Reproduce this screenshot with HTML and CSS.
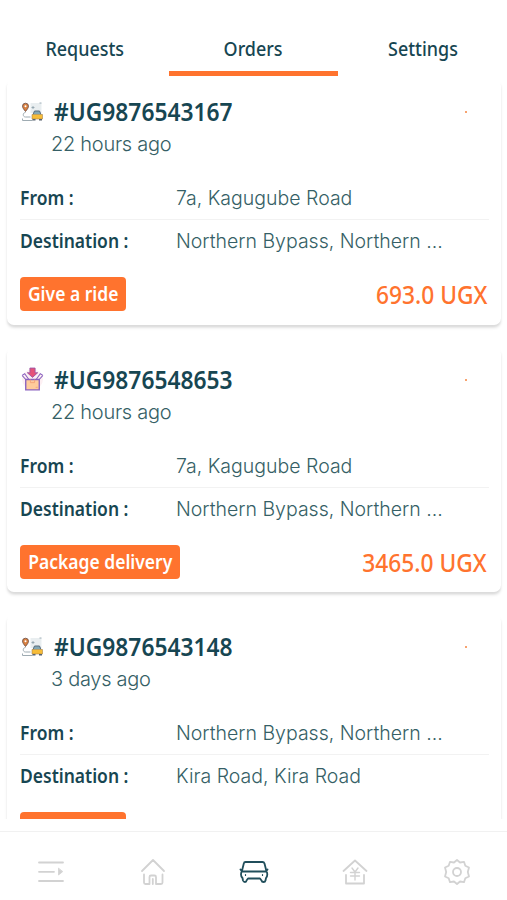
FILE: index.html
```html
<!DOCTYPE html>
<html lang="en">
<head>
<meta charset="utf-8">
<title>Orders</title>
<link rel="stylesheet" href="styles.css">
</head>
<body>
<svg class="defs" width="0" height="0">
  <symbol id="ride" viewBox="0 0 22 20">
    <path d="M9 1h11v10H9z" fill="#e9eef0"/>
    <path d="M4 10.500c-3 0-3 4.500 0 4.500h5M1 18.500h10M1 18.500v-2" fill="none" stroke="#9eabb2" stroke-width="1"/>
    <path d="M4 9.500C2.500 7.500 1 6 1 4.200a3 3 0 0 1 6 0C7 6 5.500 7.500 4 9.500z" fill="#d98140" stroke="#654a46" stroke-width=".8"/>
    <circle cx="4" cy="4.200" r="1" fill="#fff"/>
    <path d="M11.500 12.500l1.500-3.500h5l1.500 3.500" fill="#82a7b5" stroke="#596c7b"/>
    <path d="M10.500 12.500h10.500v4.500h-10.500z" fill="#f7bd38" stroke="#ab8546" stroke-width=".6"/>
    <path d="M11 17h3v1.500h-3zM17.500 17h3v1.500h-3z" fill="#596370"/>
    <path d="M11.500 4v3M10 5.500h3M18 1h2" stroke="#899ca7" stroke-width=".8"/>
  </symbol>
  <symbol id="package" viewBox="0 0 22 24">
    <circle cx="11" cy="12" r="10" fill="#fdf0f3"/>
    <path d="M8.500 1h5v4.500h2.500L11 10 6 5.500h2.500z" fill="#e65278" stroke="#9654a7" stroke-width=".8"/>
    <path d="M4.500 12h13v10h-13z" fill="#ffcc9b" stroke="#8a62bf" stroke-width="1.300"/>
    <path d="M4.500 12L1 8M17.500 12L21 8M1 8l2.500-1.500L7.500 12M21 8l-2.500-1.500L14.500 12" fill="none" stroke="#8a62bf" stroke-width="1"/>
    <path d="M9 12v3h4v-3M14 19.500h2" fill="none" stroke="#f3a078" stroke-width=".8"/>
  </symbol>
</svg>
<div class="app">
  <nav class="tabs">
    <a class="tab"><span class="narrow">Requests</span></a>
    <a class="tab active"><span class="narrow">Orders</span></a>
    <a class="tab"><span class="narrow">Settings</span></a>
  </nav>
  <main class="orders">
    <article class="card">
      <header class="head"><svg class="kind"><use href="#ride"/></svg><h2>#UG9876543167</h2><i class="dot"></i></header>
      <p class="time">22 hours ago</p>
      <dl>
        <div class="row"><dt>From :</dt><dd>7a, Kagugube Road</dd></div>
        <div class="row"><dt>Destination :</dt><dd>Northern Bypass, Northern ...</dd></div>
      </dl>
      <footer class="foot"><span class="badge"><span class="narrow">Give a ride</span></span><strong>693.0 UGX</strong></footer>
    </article>
    <article class="card">
      <header class="head"><svg class="kind parcel"><use href="#package"/></svg><h2>#UG9876548653</h2><i class="dot"></i></header>
      <p class="time">22 hours ago</p>
      <dl>
        <div class="row"><dt>From :</dt><dd>7a, Kagugube Road</dd></div>
        <div class="row"><dt>Destination :</dt><dd>Northern Bypass, Northern ...</dd></div>
      </dl>
      <footer class="foot"><span class="badge delivery"><span class="narrow">Package delivery</span></span><strong>3465.0 UGX</strong></footer>
    </article>
    <article class="card">
      <header class="head"><svg class="kind"><use href="#ride"/></svg><h2>#UG9876543148</h2><i class="dot"></i></header>
      <p class="time">3 days ago</p>
      <dl>
        <div class="row"><dt>From :</dt><dd>Northern Bypass, Northern ...</dd></div>
        <div class="row"><dt>Destination :</dt><dd>Kira Road, Kira Road</dd></div>
      </dl>
      <footer class="foot"><span class="badge"></span></footer>
    </article>
  </main>
  <nav class="bottom">
    <a><svg viewBox="0 0 30 30"><path d="M3 5.500h24M3 14.800h15M3 24h24"/><path d="M22.500 11.500v6.500l4-3.200z" fill="currentColor" stroke-width=".8"/></svg></a>
    <a><svg viewBox="0 0 30 30"><path d="M4 14L15 3l11 11M6 17.500v8q0 1.500 1.500 1.500h4v-7q0-1.500 1.500-1.500h3.500q1.500 0 1.500 1.500v7h5q1.500 0 1.500-1.500v-8M14.800 22v5"/></svg></a>
    <a class="current"><svg viewBox="0 0 30 30"><path d="M6.500 5h17q1.500 0 2 1.500l2 8q.8 1 .8 3t-1.300 3.500l-.5 2.500q-.3 1.500-2 1.500t-2-1.500l-1.500-2h-12l-1.500 2Q7.500 25 6 25t-2-1.500L3.500 21Q2 19.500 2 17.500t.8-3l2-8Q5 5 6.500 5zM3.500 14.500h23M1.500 12.500l1.500 2M28.500 12.500l-1.500 2"/><path d="M6.500 17.500v1M23.500 17.500v1" stroke-width="1.200"/></svg></a>
    <a><svg viewBox="0 0 30 30"><path d="M3.500 14L15 3.500 26.500 14M6 18v8.500h18V18"/><path d="M12 11l3 4 3-4M10.500 15.500h9M10.500 19h9M15 15v8" stroke-width="1.400"/></svg></a>
    <a><svg viewBox="0 0 30 30"><path d="M15 3l3 2.500 4-.7 1.300 3.900L27 10.500 25.800 15 27 19.500l-3.700 1.800L22 25.200l-4-.7-3 2.500-3-2.500-4 .7-1.300-3.900L3 19.500 4.200 15 3 10.500l3.700-1.800L8 4.800l4 .7z"/><circle cx="15" cy="15" r="4"/></svg></a>
  </nav>
</div>
</body>
</html>
```
FILE: styles.css
```css
* { box-sizing: border-box; }
body { margin: 0; background: #fff; color: #174652; font-family: "Noto Sans", "Liberation Sans", sans-serif; }
.defs { display: block; }
.app { height: 900px; display: flex; flex-direction: column; overflow: hidden; }
.tabs { height: 79px; flex: none; display: grid; grid-template-columns: repeat(3, 1fr); padding: 26px 0 3px; }
.tab { display: flex; align-items: center; justify-content: center; border-bottom: 5px solid transparent; font-size: 19.5px; font-weight: 500; }
.active { border-color: #ff732e; }
.narrow { display: inline-block; transform: scaleX(.92); white-space: nowrap; }
.orders { height: 740px; flex: none; overflow: hidden; display: flex; flex-direction: column; gap: 22px; padding: 0 6px 0 7px; }
.card { height: 245.5px; flex: none; padding: 15px 13px 13px; border-radius: 7px; box-shadow: 0 3px 3px rgba(0,0,0,.11), 0 2px 2px rgba(0,0,0,.04); }
.head { display: flex; align-items: center; height: 36px; padding-left: 1px; }
.kind { width: 23px; height: 20px; margin-right: 10px; }
.parcel { height: 25px; }
h2 { margin: 0; font-size: 24.5px; line-height: 36px; font-weight: 600; white-space: nowrap; transform: scaleX(.93); transform-origin: left; }
.dot { width: 2px; height: 2px; margin: 0 21px 0 auto; background: #f7a36f; }
.time { margin: 0 0 24px 31px; font: 300 20px/28px Inter, sans-serif; letter-spacing: -.28px; color: #365f66; white-space: nowrap; }
dl { margin: 0; }
.row { display: grid; grid-template-columns: 156px 1fr; height: 37px; align-items: center; padding-bottom: 5px; margin-right: -1px; }
.row + .row { height: 49px; border-top: 1px solid #f2f2f2; padding-bottom: 6px; }
dt { font-size: 19px; font-weight: 600; white-space: nowrap; transform: scaleX(.92); transform-origin: left; }
dd { margin: 0; font: 300 19.5px/28px Inter, sans-serif; color: #365f66; white-space: nowrap; }
.foot { display: flex; align-items: center; justify-content: space-between; margin-top: 9px; height: 34px; padding-right: 1px; }
.badge { height: 34px; width: 106px; display: flex; align-items: center; justify-content: center; border-radius: 4px; background: #ff732e; color: #fff; font-size: 19px; font-weight: 600; white-space: nowrap; }
.delivery { width: 160px; }
strong { font-size: 25px; line-height: 34px; font-weight: 500; color: #ff732e; transform: scaleX(.91); transform-origin: right; }
.bottom { flex: 1; margin-top: 12px; border-top: 1px solid #f1f1f1; display: grid; grid-template-columns: repeat(5, 1fr); padding-top: 25px; }
.bottom a { display: flex; justify-content: center; padding-left: 1px; color: #d2d2d2; }
.bottom svg { width: 30px; height: 30px; fill: none; stroke: currentColor; stroke-width: 1.8; stroke-linecap: round; stroke-linejoin: round; }
.bottom .current { color: #204e5b; }
```
